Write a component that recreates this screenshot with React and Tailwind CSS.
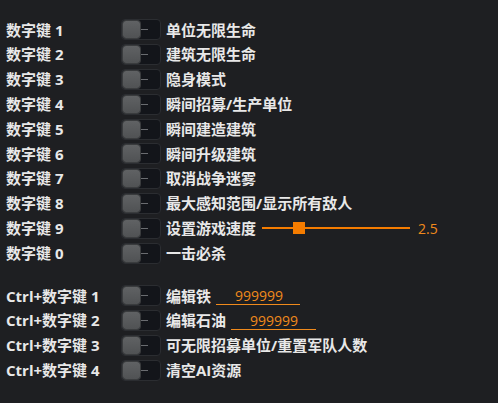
const font = { fontFamily: '"Open Sans", "Noto Sans CJK SC", "Noto Sans", sans-serif' }

function Toggle() {
  return (
    <div className="flex h-[21px] w-[40px] shrink-0 items-center rounded-[4px] border border-[#2b2d31] bg-[#13151a] pl-[1px]">
      <div className="h-[17px] w-[17px] rounded-[3px] bg-gradient-to-b from-[#606264] to-[#505254] shadow-[0_0_0_1px_#3a3c3e]" />
      <div className="ml-[1px] h-[1px] w-[7px] bg-[#6a6c70]" />
    </div>
  )
}

function Row({ label, children }) {
  return (
    <div className="flex h-[24.8px] items-center">
      <span className="w-[115px] shrink-0 text-[15px] font-bold text-[#e8e8e8]">{label}</span>
      <Toggle />
      <div className="ml-[5px] flex items-center text-[15px] font-bold text-[#e8e8e8]">{children}</div>
    </div>
  )
}

function Field({ value, pl, w }) {
  return (
    <span
      className={`ml-[5px] inline-block border-b border-[#f08a1c] text-[14px] font-normal leading-[17px] text-[#f08a1c] ${pl} ${w}`}
    >
      {value}
    </span>
  )
}

export default function App() {
  const first = [
    ['数字键 1', '单位无限生命'],
    ['数字键 2', '建筑无限生命'],
    ['数字键 3', '隐身模式'],
    ['数字键 4', '瞬间招募/生产单位'],
    ['数字键 5', '瞬间建造建筑'],
    ['数字键 6', '瞬间升级建筑'],
    ['数字键 7', '取消战争迷雾'],
    ['数字键 8', '最大感知范围/显示所有敌人'],
  ]
  return (
    <div className="h-[403px] w-[498px] bg-[#1e1f22] pl-[6px] pt-[17.5px]" style={font}>
      {first.map(([k, t]) => (
        <Row key={k} label={k}>
          {t}
        </Row>
      ))}
      <Row label="数字键 9">
        设置游戏速度
        <div className="relative ml-[6px] flex h-[14px] w-[148px] items-center">
          <div className="h-[2px] w-full bg-[#f57c00]" />
          <div className="absolute left-[31px] top-[1px] h-[12px] w-[12px] bg-[#f57c00]" />
        </div>
        <span className="ml-[8px] text-[14px] font-normal text-[#f08a1c]">2.5</span>
      </Row>
      <Row label="数字键 0">一击必杀</Row>
      <div className="h-[18px]" />
      <Row label="Ctrl+数字键 1">
        编辑铁
        <Field value="999999" pl="pl-[19px]" w="w-[84px]" />
      </Row>
      <Row label="Ctrl+数字键 2">
        编辑石油
        <Field value="999999" pl="pl-[19px]" w="w-[85px]" />
      </Row>
      <Row label="Ctrl+数字键 3">可无限招募单位/重置军队人数</Row>
      <Row label="Ctrl+数字键 4">清空AI资源</Row>
    </div>
  )
}
